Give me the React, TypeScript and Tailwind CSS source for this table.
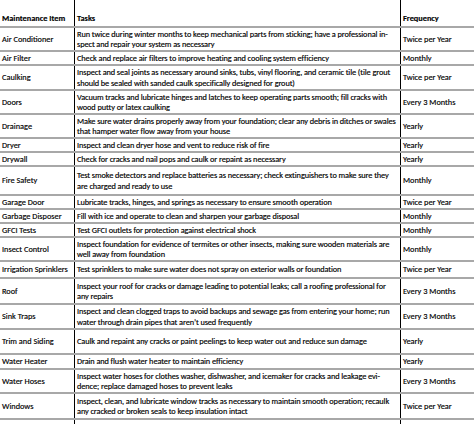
import React from "react";

type Row = {
  item: string;
  tasks: string[];
  freq: string;
  h: string;
};

const rows: Row[] = [
  {
    item: "Air Conditioner",
    tasks: [
      "Run twice during winter months to keep mechanical parts from sticking; have a professional in-",
      "spect and repair your system as necessary",
    ],
    freq: "Twice per Year",
    h: "h-[24px]",
  },
  {
    item: "Air Filter",
    tasks: ["Check and replace air filters to improve heating and cooling system efficiency"],
    freq: "Monthly",
    h: "h-[14px]",
  },
  {
    item: "Caulking",
    tasks: [
      "Inspect and seal joints as necessary around sinks, tubs, vinyl flooring, and ceramic tile (tile grout",
      "should be sealed with sanded caulk specifically designed for grout)",
    ],
    freq: "Twice per Year",
    h: "h-[25px]",
  },
  {
    item: "Doors",
    tasks: [
      "Vacuum tracks and lubricate hinges and latches to keep operating parts smooth; fill cracks with",
      "wood putty or latex caulking",
    ],
    freq: "Every 3 Months",
    h: "h-[24px]",
  },
  {
    item: "Drainage",
    tasks: [
      "Make sure water drains properly away from your foundation; clear any debris in ditches or swales",
      "that hamper water flow away from your house",
    ],
    freq: "Yearly",
    h: "h-[24px]",
  },
  {
    item: "Dryer",
    tasks: ["Inspect and clean dryer hose and vent to reduce risk of fire"],
    freq: "Yearly",
    h: "h-[14px]",
  },
  {
    item: "Drywall",
    tasks: ["Check for cracks and nail pops and caulk or repaint as necessary"],
    freq: "Yearly",
    h: "h-[14px]",
  },
  {
    item: "Fire Safety",
    tasks: [
      "Test smoke detectors and replace batteries as necessary; check extinguishers to make sure they",
      "are charged and ready to use",
    ],
    freq: "Monthly",
    h: "h-[29px]",
  },
  {
    item: "Garage Door",
    tasks: ["Lubricate tracks, hinges, and springs as necessary to ensure smooth operation"],
    freq: "Twice per Year",
    h: "h-[14px]",
  },
  {
    item: "Garbage Disposer",
    tasks: ["Fill with ice and operate to clean and sharpen your garbage disposal"],
    freq: "Monthly",
    h: "h-[14px]",
  },
  {
    item: "GFCI Tests",
    tasks: ["Test GFCI outlets for protection against electrical shock"],
    freq: "Monthly",
    h: "h-[14px]",
  },
  {
    item: "Insect Control",
    tasks: [
      "Inspect foundation for evidence of termites or other insects, making sure wooden materials are",
      "well away from foundation",
    ],
    freq: "Monthly",
    h: "h-[24px]",
  },
  {
    item: "Irrigation Sprinklers",
    tasks: ["Test sprinklers to make sure water does not spray on exterior walls or foundation"],
    freq: "Twice per Year",
    h: "h-[17px]",
  },
  {
    item: "Roof",
    tasks: [
      "Inspect your roof for cracks or damage leading to potential leaks; call a roofing professional for",
      "any repairs",
    ],
    freq: "Every 3 Months",
    h: "h-[26px]",
  },
  {
    item: "Sink Traps",
    tasks: [
      "Inspect and clean clogged traps to avoid backups and sewage gas from entering your home; run",
      "water through drain pipes that aren\u2019t used frequently",
    ],
    freq: "Every 3 Months",
    h: "h-[25px]",
  },
  {
    item: "Trim and Siding",
    tasks: ["Caulk and repaint any cracks or paint peelings to keep water out and reduce sun damage"],
    freq: "Yearly",
    h: "h-[25px]",
  },
  {
    item: "Water Heater",
    tasks: ["Drain and flush water heater to maintain efficiency"],
    freq: "Yearly",
    h: "h-[15px]",
  },
  {
    item: "Water Hoses",
    tasks: [
      "Inspect water hoses for clothes washer, dishwasher, and icemaker for cracks and leakage evi-",
      "dence; replace damaged hoses to prevent leaks",
    ],
    freq: "Every 3 Months",
    h: "h-[24px]",
  },
  {
    item: "Windows",
    tasks: [
      "Inspect, clean, and lubricate window tracks as necessary to maintain smooth operation; recaulk",
      "any cracked or broken seals to keep insulation intact",
    ],
    freq: "Twice per Year",
    h: "h-[26px]",
  },
];

const cell = "flex flex-col justify-center pl-[2px] overflow-hidden whitespace-nowrap";

export default function App() {
  return (
    <div
      className="w-[474px] h-[424px] overflow-hidden bg-white text-black text-[8.3px] leading-[10.5px] [-webkit-text-stroke:0.15px_black]"
      style={{ fontFamily: "Carlito, Lato, 'Liberation Sans', sans-serif" }}
    >
      <div className="grid grid-cols-[75px_326px_1fr] h-[28px] border-b-2 border-[#a8a8a8] font-bold">
        <div className="flex items-end pl-[2px] pb-[3px] border-r border-black">Maintenance Item</div>
        <div className="flex items-end pl-[2px] pb-[3px] border-r border-black">Tasks</div>
        <div className="flex items-end pl-[2px] pb-[3px]">Frequency</div>
      </div>

      {rows.map((r) => (
        <div
          key={r.item}
          className={`grid grid-cols-[75px_326px_1fr] border-b-2 border-[#a8a8a8] ${r.h}`}
        >
          <div className={`${cell} border-r border-black`}>{r.item}</div>
          <div className={`${cell} border-r border-black tracking-[-0.09px]`}>
            {r.tasks.map((t) => (
              <span key={t}>{t}</span>
            ))}
          </div>
          <div className={cell}>{r.freq}</div>
        </div>
      ))}

      <div className="grid grid-cols-[75px_326px_1fr] h-[20px]">
        <div className="border-r border-black" />
        <div className="border-r border-black" />
        <div />
      </div>
    </div>
  );
}
